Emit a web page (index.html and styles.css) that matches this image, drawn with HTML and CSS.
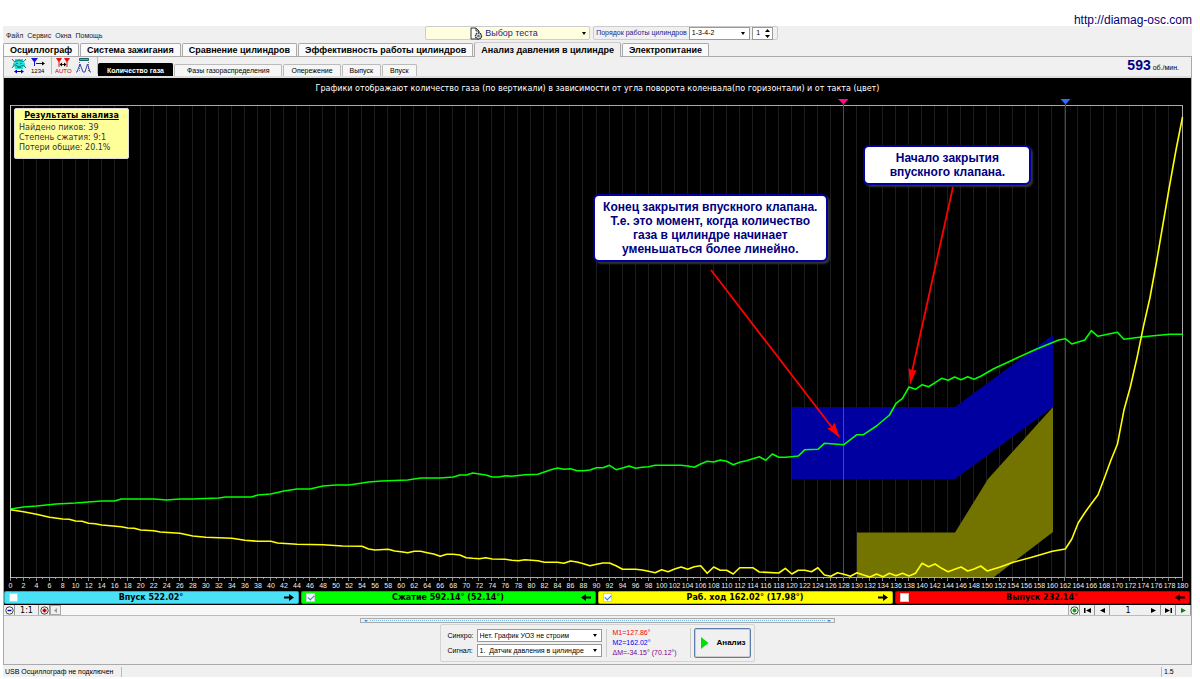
FILE: index.html
```html
<!DOCTYPE html>
<html lang="ru">
<head>
<meta charset="utf-8">
<title>Diamag – анализ давления в цилиндре</title>
<link rel="stylesheet" href="styles.css">
</head>
<body>
<header class="site"><a href="http://diamag-osc.com">http://diamag-osc.com</a></header>
<main class="app">
  <div class="topbar">
    <nav class="menu">
      <button>Файл</button><button>Сервис</button><button>Окна</button><button>Помощь</button>
    </nav>
    <div class="options">
      <button class="test-picker">
        <svg width="13" height="13" viewBox="0 0 13 13"><path d="M1 1h5l3 3v8H1z" fill="#fff" stroke="#333"/><path d="M6 1v3h3" fill="none" stroke="#333"/><circle cx="8.5" cy="9" r="3" fill="#ddd" stroke="#333" stroke-width="1.4" stroke-dasharray="1.6 .6"/><circle cx="8.5" cy="9" r="1.3" fill="#678"/></svg>
        <span>Выбор теста</span>
        <i class="caret"></i>
      </button>
      <div class="order">
        <label for="order">Порядок работы цилиндров</label>
        <span class="select"><select id="order"><option>1-3-4-2</option></select></span>
        <span class="spin"><input type="text" value="1" aria-label="Номер цилиндра"><svg width="7" height="11" viewBox="0 0 7 11"><path d="M1 4L3.500 1L6 4zM1 7L3.500 10L6 7z"/></svg></span>
      </div>
    </div>
  </div>
  <nav class="tabs">
    <button>Осциллограф</button><button>Система зажигания</button><button>Сравнение цилиндров</button><button>Эффективность работы цилиндров</button><button class="active">Анализ давления в цилиндре</button><button>Электропитание</button>
  </nav>
  <section class="view">
    <div class="toolbar">
      <div class="tools">
        <button aria-label="Форма сигнала"><svg width="16" height="16" viewBox="0 0 16 16"><path d="M4 1h8v3l2 1v3l-2 1v2H4V9L2 8V5l2-1z" fill="#20e0e0"/><path d="M1 1q2 4 5 2q2-2 4 0q3 2 5-2M1 10q3-5 5-2q2 2 4 0q3-2 5 2" fill="none" stroke="#157a55"/><path d="M5 5.500h2m2 0h2M6 9.500h4" stroke="#d33"/><path d="M4 13.500h8" stroke="#00c"/><path d="M3 13.500l3-2v4zM13 13.500l-3-2v4z" fill="#00c"/></svg></button>
        <button aria-label="Нумерация"><svg width="18" height="16" viewBox="0 0 18 16"><path d="M1 0h7L5 4v4H4V4z" fill="#11d"/><path d="M6 5.500h7" stroke="#222"/><path d="M15 5.500l-3-2v4z"/><text x="1" y="15" class="tool-text">1234</text></svg></button>
        <i class="divider"></i>
        <button aria-label="Авто"><svg width="18" height="16" viewBox="0 0 18 16"><path d="M1 0h6L4.500 4v5h-1V4zM9 0h6l-2.500 4v5h-1V4z" fill="#e11"/><path d="M5 6.500h6" stroke="#222"/><path d="M4.500 6.500l2.500-2v4zM11.500 6.500l-2.500-2v4z"/><text x="0" y="15" class="tool-text auto">AUTO</text></svg></button>
        <button aria-label="Сравнение"><svg width="18" height="16" viewBox="0 0 18 16"><path d="M3.500 .5h9v2h-9z" fill="#2cc" stroke="#175f66"/><path d="M3.500 4v9M12.500 4v9" stroke="#777" stroke-dasharray="1 1"/><path d="M0 14h1L4 6L7 14h2L11.500 6L14 14h1" fill="none" stroke="#3344b8"/></svg></button>
        <i class="divider"></i>
      </div>
      <nav class="subtabs">
        <button class="active">Количество газа</button><button class="roomy">Фазы газораспределения</button><button>Опережение</button><button>Выпуск</button><button>Впуск</button>
      </nav>
      <p class="rpm"><b>593</b> об./мин.</p>
    </div>
    <div class="chart">
      <p class="caption">Графики отображают количество газа (по вертикали) в зависимости от угла поворота коленвала(по горизонтали) и от такта (цвет)</p>
      <div class="plot">
        <svg id="plot" viewBox="4 98 1187 492" role="img" aria-label="Количество газа по углу поворота коленвала">
          <g id="grid"></g>
          <path d="M792 407H955L1053 335V407L955 479H792z" fill="#0000a0"/>
          <path d="M857 532.500H955L988 479L1053 407V532L994 577H857z" fill="#737300"/>
          <path d="M10.500 105.500H1183" stroke="#aaa"/>
          <path d="M1182.500 105V578M10 577.500H1183" stroke="#aaa"/>
          <path d="M10.500 105V578" stroke="#ccc"/>
          <rect x="843" y="104" width="1" height="474" fill="#b81868"/>
          <path d="M838 99h10.500l-5 5.500z" fill="#ff0a90"/>
          <rect x="1065" y="104" width="1" height="474" fill="#2048b0"/>
          <path d="M1060.500 99h10l-5 5.500z" fill="#2f6cff"/>
          <polyline id="gas-compression" class="curve green"/>
          <polyline id="gas-stroke" class="curve yellow"/>
          <path d="M711 270L834 430M953 187L911.500 374" stroke="#f00" stroke-width="1.800"/>
          <path d="M840 438L827 428L831.500 427.500L834.500 422.500zM910 385L908.500 368L912 370.500L916.500 370z" fill="#f00"/>
        </svg>
        <aside class="results">
          <h2>Результаты анализа</h2>
          <p>Найдено пиков: 39</p><p>Степень сжатия: 9:1</p><p>Потери общие: 20.1%</p>
        </aside>
        <p class="callout end">Конец закрытия впускного клапана.<br>Т.е. это момент, когда количество<br>газа в цилиндре начинает<br>уменьшаться более линейно.</p>
        <p class="callout start">Начало закрытия<br>впускного клапана.</p>
      </div>
    </div>
    <div class="phases">
      <label class="intake"><input type="checkbox"><span>Впуск 522.02°</span><svg width="10" height="7" viewBox="0 0 10 7"><path d="M0 2.500h5V0l5 3.500L5 7V4.500H0z"/></svg></label>
      <label class="compression"><input type="checkbox" checked><span>Сжатие 592.14° (52.14°)</span><svg width="10" height="7" viewBox="0 0 10 7"><path d="M10 2.500H5V0L0 3.500L5 7V4.500h5z"/></svg></label>
      <label class="power"><input type="checkbox" checked><span>Раб. ход 162.02° (17.98°)</span><svg width="10" height="7" viewBox="0 0 10 7"><path d="M0 2.500h5V0l5 3.500L5 7V4.500H0z"/></svg></label>
      <label class="exhaust"><input type="checkbox"><span>Выпуск 232.14°</span><svg width="10" height="7" viewBox="0 0 10 7"><path d="M10 2.500H5V0L0 3.500L5 7V4.500h5z"/></svg></label>
    </div>
    <div class="pager">
      <button aria-label="Уменьшить"><svg width="9" height="9" viewBox="0 0 9 9"><circle cx="4.500" cy="4.500" r="3.700" fill="#fff" stroke="#444"/><path d="M2.500 4.500h4" stroke="#00a" stroke-width="1.500"/></svg></button>
      <button class="scale">1:1</button>
      <button aria-label="Увеличить"><svg width="9" height="9" viewBox="0 0 9 9"><circle cx="4.500" cy="4.500" r="3.700" fill="#fff" stroke="#444"/><path d="M2.500 4.500h4M4.500 2.500v4" stroke="#a00" stroke-width="1.800"/></svg></button>
      <button class="wide" aria-label="Прокрутить влево"><svg width="5" height="5" viewBox="0 0 5 5"><path d="M4 0v5L1 2.500z" fill="#999"/></svg></button>
      <div class="track"></div>
      <button aria-label="К маркеру"><svg width="9" height="9" viewBox="0 0 9 9"><circle cx="4.500" cy="4.500" r="3.700" fill="#fff" stroke="#444"/><circle cx="4.500" cy="4.500" r="2" fill="#0a0"/></svg></button>
      <button class="nav" aria-label="Первый"><svg width="7" height="5" viewBox="0 0 7 5"><path d="M0 0h1.500v5H0zM7 0v5L2 2.500z"/></svg></button>
      <button class="nav" aria-label="Предыдущий"><svg width="5" height="5" viewBox="0 0 5 5"><path d="M5 0v5L0 2.500z"/></svg></button>
      <output>1</output>
      <button class="nav" aria-label="Следующий"><svg width="5" height="5" viewBox="0 0 5 5"><path d="M0 0v5L5 2.500z"/></svg></button>
      <button class="nav" aria-label="Последний"><svg width="7" height="5" viewBox="0 0 7 5"><path d="M5.500 0H7v5H5.500zM0 0v5L5 2.500z"/></svg></button>
      <button class="nav" aria-label="Воспроизвести"><svg width="5" height="5" viewBox="0 0 5 5"><path d="M0 0v5L5 2.500z" fill="#080"/></svg></button>
    </div>
    <div class="lower">
      <div class="splitter"><i></i><b></b><i></i></div>
      <form class="panel">
        <div class="fields">
          <label for="sync">Синхро:</label><span class="select"><select id="sync"><option>Нет. График УОЗ не строим</option></select></span>
          <label for="signal">Сигнал:</label><span class="select"><select id="signal"><option>1.&nbsp; Датчик давления в цилиндре</option></select></span>
        </div>
        <div class="markers"><p class="m1">М1=127.86°</p><p class="m2">М2=162.02°</p><p class="dm">ΔМ=-34.15° (70.12°)</p></div>
        <button type="button" class="analyze"><svg width="8" height="12" viewBox="0 0 8 12"><path d="M0 0L7.500 6L0 12z" fill="#00e000"/></svg><span>Анализ</span></button>
      </form>
    </div>
  </section>
  <footer class="status"><span>USB Осциллограф не подключен</span><span></span><span>1.5</span></footer>
</main>
<script src="chart.js"></script>
</body>
</html>
```

FILE: styles.css
```css
* { box-sizing: border-box; }
body { margin: 0; background: #fff; color: #000; font: 7px/10px "Liberation Sans", Arial, sans-serif; }
p, h2 { margin: 0; }
svg { display: block; }
button, select, input { font: inherit; color: inherit; margin: 0; padding: 0; border: 0; border-radius: 0; background: none; }
.site { height: 26px; padding: 13px 8px 0 0; text-align: right; font-size: 12px; line-height: 14px; }
.site a { color: #000080; text-decoration: none; }
.app { margin: 0 8px 0 3px; background: #f0f0f0; }

.topbar { display: grid; grid-template-columns: 1fr auto 1fr; height: 16px; }
.menu { display: flex; gap: 4px; padding: 4px 0 0 3px; align-items: center; color: #222; }
.options { display: flex; gap: 3px; padding-left: 8px; align-items: flex-start; }
.test-picker { display: flex; align-items: center; width: 165px; height: 14px; padding: 0 3px 0 44px; gap: 2px; background: #ffffe0; border: 1px solid #ccc; border-radius: 2px; color: #1c1c8c; font-size: 9px; }
.test-picker .caret { margin-left: auto; }
.caret, .select::after { content: ""; border: 2px solid transparent; border-top: 3px solid #000; border-bottom: 0; width: 0; height: 0; }
.order { display: flex; align-items: center; gap: 2px; height: 14px; padding: 0 4px 0 2px; border: 1px solid #ccc; border-radius: 2px; color: #1c1c8c; }
.select { display: flex; align-items: center; position: relative; background: #fff; border: 1px solid #999; color: #000; }
.select::after { position: absolute; right: 4px; top: 4px; pointer-events: none; }
select { appearance: none; width: 100%; padding: 0 12px 0 2px; outline: 0; }
.order .select { width: 61px; height: 13px; }
.spin { display: flex; align-items: center; width: 21px; height: 13px; background: #fff; border: 1px solid #999; color: #000; }
.spin input { width: 11px; text-align: center; }

.tabs { display: flex; gap: 1px; align-items: flex-end; height: 15px; border-bottom: 1px solid #aaa; }
.tabs button { height: 13px; padding: 0 6px; border: 1px solid #aaa; border-bottom: 0; border-radius: 2px 2px 0 0; background: #fafafa; font-size: 9px; font-weight: bold; line-height: 12px; white-space: nowrap; }
.tabs .active { height: 15px; margin-bottom: -1px; background: #f0f0f0; border-top-color: #ccc; }
.view { border: solid #aaa; border-width: 0 1px 1px; }
.toolbar { display: flex; align-items: flex-end; height: 21px; border-bottom: 2px solid #ddd; }
.tools { display: flex; gap: 3px; padding: 0 0 2px 7px; align-items: center; }
.tool-text { font: 6px "Liberation Sans", Arial, sans-serif; }
.auto { fill: #b00; }
.divider { width: 1px; height: 17px; background: #bbb; }
.subtabs { display: flex; align-items: flex-end; gap: 1px; }
.subtabs button { height: 12px; padding: 0 7px; border: 1px solid #bbb; border-bottom: 0; border-radius: 2px 2px 0 0; background: #f6f6f6; line-height: 11px; white-space: nowrap; }
.subtabs .active { height: 13px; padding: 0 8px; background: #000; border-color: #000; color: #fff; font-weight: bold; }
.subtabs .roomy { padding: 0 12px; }
.rpm { margin-left: auto; padding: 0 12px 3px 0; }
.rpm b { color: #000080; font-size: 14px; line-height: 16px; }

.chart { background: #000; }
.caption { height: 20px; padding-top: 5px; color: #fff; text-align: center; font: 8px/11px "DejaVu Sans", Verdana, sans-serif; }
.plot { position: relative; }
.plot > svg { width: 100%; height: auto; }
.curve { fill: none; stroke-width: 1.6px; stroke-linejoin: round; }
.green { stroke: #00ff00; }
.yellow { stroke: #ffff00; }
.axis-label { fill: #eee; font: 7px "Liberation Sans", Arial, sans-serif; text-anchor: middle; }
.results { position: absolute; left: 10px; top: 10px; width: 115px; padding: 2px 4px 5px; border-radius: 2px; background: #ffff99; color: #333; border: 1px solid #ddd; font: 8px/10px "DejaVu Sans", Verdana, sans-serif; }
.results h2 { margin-bottom: 2px; color: #000; font-size: 8px; line-height: 10px; text-align: center; text-decoration: underline; white-space: nowrap; }
.callout { position: absolute; border: 2px solid #0000a0; border-radius: 6px; background: #fff; color: #000080; font-size: 12px; font-weight: bold; line-height: 14px; text-align: center; white-space: nowrap; padding: 4px 0; box-shadow: 2px 2px 2px #333; }
.end { left: 49.6%; top: 19.5%; width: 235px; }
.start { left: 72.4%; top: 9.6%; width: 168px; }

.phases { display: grid; grid-template-columns: repeat(4, 1fr); gap: 2px; padding: 1px 1px 1px 0; background: #000; }
.phases label { display: flex; align-items: center; height: 13px; padding: 0 4px; border: 1px solid #0004; border-radius: 2px; font: bold 8px/11px "DejaVu Sans", Verdana, sans-serif; }
.phases span { flex: 1; text-align: center; }
.phases input { appearance: none; width: 9px; height: 9px; border: 1px solid #ccc; background: #fff; }
.phases input:checked::after { content: ""; display: block; width: 3px; height: 5px; margin: 0 2px; border: solid #2080e0; border-width: 0 1px 1px 0; transform: rotate(45deg); }
.intake { background: #4ae1f7; }
.compression { background: #00ff00; }
.power { background: #ffff00; }
.exhaust { background: #ff0000; }

.pager { display: flex; height: 11px; background: #f0f0f0; border-bottom: 1px solid #bbb; font: 8px/10px "DejaVu Sans", Verdana, sans-serif; }
.pager button { display: flex; align-items: center; justify-content: center; width: 11px; border-right: 1px solid #999; }
.pager .scale { width: 24px; padding-top: 1px; }
.pager .wide { border: 1px solid #aaa; }
.pager .nav { width: 15px; }
.track { flex: 1; background: #f8f8f8; border-right: 1px solid #aaa; }
.pager output { width: 36px; padding-top: 1px; text-align: center; }
.lower { display: flex; flex-direction: column; align-items: center; gap: 1px; padding: 2px 0; }
.splitter { display: flex; align-items: center; gap: 2px; width: 40%; height: 5px; padding: 0 3px; border: 1px solid #aaa; }
.splitter i { border: 2px solid transparent; border-top-color: #3090e0; border-bottom: 0; }
.splitter b { flex: 1; border-top: 1px dotted #80b8e8; }
.panel { display: flex; align-items: center; height: 38px; padding: 0 3px 0 6px; border: 1px solid #d4d4d4; border-radius: 2px; }
.fields { display: grid; grid-template-columns: auto 125px; gap: 2px 3px; align-items: center; padding-right: 4px; border-right: 1px solid #ccc; }
.fields .select { height: 13px; }
.markers { width: 84px; margin-right: 3px; padding-left: 6px; border-right: 1px solid #ccc; }
.m1 { color: #f00000; }
.m2 { color: #0000f0; }
.dm { color: #800080; }
.analyze { display: flex; align-items: center; gap: 8px; width: 57px; height: 30px; padding-left: 6px; border: 1px solid #5c7ea8; border-radius: 2px; box-shadow: inset 0 0 0 1px #ccc; font-weight: bold; font-size: 8px; }
.status { display: flex; height: 12px; padding-top: 2px; }
.status span { padding-left: 2px; border-right: 1px solid #bbb; line-height: 9px; }
.status span:first-child { width: 119px; }
.status span:nth-child(2) { flex: 1; }
.status span:last-child { width: 30px; border: 0; }
```

FILE: chart.js
```javascript
// Curve samples: crank angle in degrees, then the height of the point on the plot.
const compression = "0,509 1,508 2,507 4,506 7,504 10,503 14,501 16,501 17,499 22,499 24,500 26,499 28,499 32,498 33,497 37,497 38,495 40,494 42,491 44,489 46,489 48,486 50,485 52,485 54,483 55,482 57,481 61,480 63,478 66,478 68,477 69,475 70,475 71,473 72,474 73,475 74,477 75,477 76,475.7 77,476.3 79,474.7 81,474.3 82,472 83,469.7 84,468 85,469.3 86,468.7 87,470.7 88,470.7 89,470 90,467.7 91,467.7 92,465.3 93,469.7 94,468 95,466 96,468.3 97,467.3 98,466.7 99,465.3 103,465.3 104,466 105,467.3 106,464 107,461.3 108,462 109,460 110,461.3 111,464.7 112,462.3 113,460.7 114,458.7 115,456.7 116,460.3 117,454 118,457.3 119,457.3 120,456.7 121,456 122,449.7 124,449.3 125,443.3 128,444.7 130,434.7 131,434.7 133,426 135,415 136,403.3 137,398.3 138,387 139,389.3 140,384.7 141,386.7 142,382.7 143,378.3 144,380.3 145,377 146,379.7 147,376.7 148,379.3 149,376.3 151,368.7 154,359.7 157,350.7 159,345.3 161,340 162,338.7 163,344 165,340 166,330.7 167,336.3 170,332.3 171,339.3 174,336.7 178,334.3 180,334.3";
const stroke = "0,509.7 2,511.7 4,514.3 6,517.3 8,519 9,519.3 10,521 11,521.3 12,523.3 13,523.7 14,525 17,526.7 18,528 19,528.3 20,530 22,530.7 23,532 26,533.3 28,536 30,537.3 34,538.3 36,540.3 38,541.3 40,541.3 41,543 44,544.3 48,544.7 51,546 54,546.3 55,549 56,550 58,549.3 59,551 60,551.7 61,552.7 62,551.3 63,551.3 64,552.7 65,554 66,556.3 67,554.3 68,554.3 69,555 70,557.7 71,558.3 72,558.7 73,557.7 74,559 76,559.3 77,560.3 78,560.7 79,559.7 81,560.7 82,562.3 84,562.3 85,563.3 86,561 87,562 88,563.7 89,565.7 90,564.3 91,563 92,563 93,565.7 94,569.3 96,569.3 97,570 98,571.3 99,572.7 100,569.7 101,571.7 102,569 103,567 104,569.3 105,566.7 106,565.7 107,573.3 108,567 109,570.3 110,570.3 111,574 112,567.7 114,567.7 115,572 118,573 119,568.3 120,574 121,570.3 122,570.3 123,571.7 124,567.7 125,575 126,576.3 127,572.7 128,574.3 129,576.3 130,572.7 131,575 132,577 133,574 134,576.7 135,573.3 136,575.7 137,573.3 138,576 139,573.3 140,563.3 141,566.7 142,564 143,568.3 144,571.7 145,569.3 146,567 147,571 148,569 149,566 150,571 152,567 154,562.3 157,557 160,551.3 162,549 163,539 164,522.7 165,512.7 166,503.7 167,495 168,478 169,460.3 170,444.3 171,410.3 172,386.7 173,358.3 174,326.7 175,298 176,262 177,224 178,186 179,150 180,117";

const svgNS = "http://www.w3.org/2000/svg";
const xOf = (deg) => 10.5 + deg * 1172 / 180;
const toPoints = (data) => data.split(" ").map((pair) => {
  const [deg, y] = pair.split(",");
  return xOf(Number(deg)).toFixed(1) + "," + y;
}).join(" ");

document.getElementById("gas-compression").setAttribute("points", toPoints(compression));
document.getElementById("gas-stroke").setAttribute("points", toPoints(stroke));

const grid = document.getElementById("grid");
function line(x, y1, y2, color) {
  const el = document.createElementNS(svgNS, "path");
  el.setAttribute("d", `M${x} ${y1}V${y2}`);
  el.setAttribute("stroke", color);
  grid.append(el);
}
for (let deg = 0; deg <= 180; deg++) {
  const x = Math.round(xOf(deg)) - 0.5;
  line(x, 578, deg % 2 ? 579 : 581, "#888");
  if (deg % 2) continue;
  line(x, 106, 577, "#1c1c1c");
  const label = document.createElementNS(svgNS, "text");
  label.setAttribute("x", xOf(deg));
  label.setAttribute("y", 588);
  label.setAttribute("class", "axis-label");
  label.textContent = deg;
  grid.append(label);
}
```
